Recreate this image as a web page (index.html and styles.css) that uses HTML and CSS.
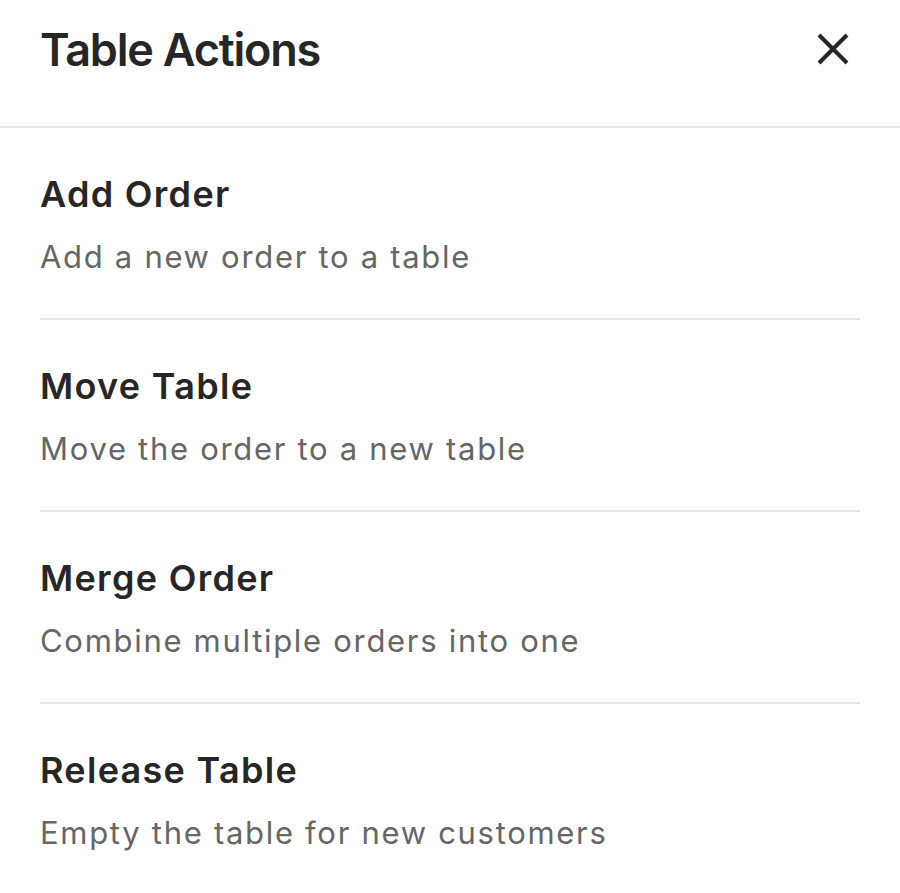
FILE: index.html
```html
<!DOCTYPE html>
<html lang="en">
<head>
<meta charset="utf-8">
<title>Table Actions</title>
<link rel="stylesheet" href="styles.css">
</head>
<body>
<div class="sheet">
  <header class="sheet-header">
    <h1 class="sheet-title">Table Actions</h1>
    <button class="close-btn" aria-label="Close">
      <svg viewBox="0 0 32 32" width="32" height="32" aria-hidden="true">
        <path d="M2 2 L30 30 M30 2 L2 30" stroke="#262626" stroke-width="4" stroke-linecap="butt" fill="none"/>
      </svg>
    </button>
  </header>
  <ul class="action-list">
    <li class="action-item">
      <div class="action-title">Add Order</div>
      <div class="action-desc">Add a new order to a table</div>
    </li>
    <li class="action-item">
      <div class="action-title">Move Table</div>
      <div class="action-desc">Move the order to a new table</div>
    </li>
    <li class="action-item">
      <div class="action-title">Merge Order</div>
      <div class="action-desc">Combine multiple orders into one</div>
    </li>
    <li class="action-item">
      <div class="action-title">Release Table</div>
      <div class="action-desc">Empty the table for new customers</div>
    </li>
  </ul>
</div>
</body>
</html>
```

FILE: styles.css
```css
* { box-sizing: border-box; }
html, body {
  margin: 0;
  padding: 0;
  background: #ffffff;
}
body {
  font-family: Inter, "Noto Sans", "Liberation Sans", sans-serif;
  color: #262626;
}
.sheet {
  width: 900px;
}
.sheet-header {
  display: flex;
  align-items: flex-start;
  justify-content: space-between;
  padding: 23px 51px 0 40px;
  height: 128px;
  border-bottom: 2px solid #e6e6e6;
}
.sheet-title {
  margin: 0;
  font-size: 45px;
  font-weight: 600;
  line-height: 1.21;
  letter-spacing: -1.2px;
  color: #262626;
}
.close-btn {
  margin: 10px 0 0 0;
  padding: 0;
  border: 0;
  background: transparent;
  width: 32px;
  height: 32px;
  display: flex;
}
.action-list {
  list-style: none;
  margin: 0;
  padding: 0 40px;
}
.action-item {
  padding: 45px 0 43px;
  border-bottom: 2px solid #e6e6e6;
  display: flex;
  flex-direction: column;
  gap: 21px;
}
.action-item:last-child {
  border-bottom: 0;
}
.action-title {
  font-size: 36px;
  font-weight: 600;
  line-height: 1.21;
  letter-spacing: 1.3px;
  color: #262626;
}
.action-desc {
  font-size: 31px;
  font-weight: 400;
  line-height: 1.21;
  letter-spacing: 1.7px;
  color: #666666;
}
```
